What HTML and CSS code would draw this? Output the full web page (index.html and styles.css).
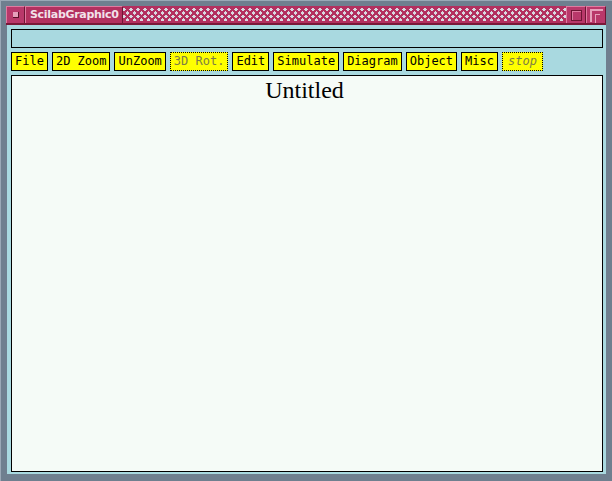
FILE: index.html
```html
<!DOCTYPE html>
<html>
<head>
<meta charset="utf-8">
<link rel="stylesheet" href="styles.css">
</head>
<body>
<div class="window">
  <div class="titlebar">
    <div class="tbtn menu"><span class="sq"></span></div>
    <div class="title">ScilabGraphic0</div>
    <div class="pattern"></div>
    <div class="tbtn iconify"><span class="box"></span></div>
    <div class="tbtn maximize"><span class="max"></span></div>
  </div>
  <div class="client">
    <div class="field"></div>
    <div class="menubar">
      <div class="mbtn">File</div>
      <div class="mbtn">2D Zoom</div>
      <div class="mbtn">UnZoom</div>
      <div class="mbtn off">3D Rot.</div>
      <div class="mbtn">Edit</div>
      <div class="mbtn">Simulate</div>
      <div class="mbtn">Diagram</div>
      <div class="mbtn">Object</div>
      <div class="mbtn">Misc</div>
      <div class="mbtn off stop">stop</div>
    </div>
    <div class="canvas">
      <div class="caption">Untitled</div>
    </div>
  </div>
</div>
</body>
</html>
```
FILE: styles.css
```css
html, body {
  margin: 0;
  padding: 0;
  width: 612px;
  height: 481px;
  overflow: hidden;
  background: #6f7f8f;
}
.window {
  box-sizing: border-box;
  width: 612px;
  height: 481px;
  padding: 6px 6px 7px 6px;
  background: #6f7f8f;
  border-top: 1px solid #9aa8b6;
  border-left: 1px solid #9aa8b6;
  display: flex;
  flex-direction: column;
}
.titlebar {
  height: 17px;
  display: flex;
  background: #b3305f;
  border-bottom: 2px solid #7a1838;
  margin-top: -1px;
  margin-left: -1px;
}
.tbtn {
  width: 16px;
  height: 16px;
  background: #b9386a;
  border-top: 1px solid #e07aa0;
  border-left: 1px solid #e07aa0;
  border-right: 1px solid #6e1534;
  display: flex;
  align-items: center;
  justify-content: center;
}
.menu { width: 17px; }
.sq {
  width: 5px;
  height: 5px;
  background: #e6a0bb;
  border-right: 1px solid #5a1028;
  border-bottom: 1px solid #5a1028;
}
.title {
  width: 92px;
  height: 16px;
  padding-left: 4px;
  background: #b3305f;
  border-top: 1px solid #e07aa0;
  border-left: 1px solid #e07aa0;
  border-right: 1px solid #6e1534;
  color: #f2e2ea;
  font-family: "DejaVu Sans", sans-serif;
  font-weight: bold;
  font-size: 11px;
  line-height: 16px;
  letter-spacing: -0.3px;
  white-space: nowrap;
}
.pattern {
  flex: 1;
  height: 13px;
  margin-top: 2px;
  background-color: #d8d8e0;
  background-image:
    repeating-linear-gradient(45deg, #b3305f 0 2.4px, transparent 2.4px 4.95px),
    repeating-linear-gradient(-45deg, #b3305f 0 2.4px, transparent 2.4px 4.95px);
}
.iconify, .maximize { width: 18px; }
.box {
  width: 9px;
  height: 9px;
  border: 1px solid #6e1534;
  box-shadow: inset 1px 1px 0 #e07aa0;
}
.max {
  width: 11px;
  height: 11px;
  border-top: 2px solid #e6a0bb;
  border-left: 2px solid #e6a0bb;
  position: relative;
}
.max::after {
  content: "";
  position: absolute;
  left: 3px;
  top: 3px;
  width: 4px;
  height: 8px;
  border-top: 1px solid #e6a0bb;
  border-left: 1px solid #e6a0bb;
}
.client {
  flex: 1;
  background: #a9d9e0;
  padding: 4px 3px 2px 4px;
  display: flex;
  flex-direction: column;
  gap: 4px;
}
.field {
  height: 17px;
  border: 1px solid #000;
}
.menubar {
  display: flex;
  gap: 4px;
  height: 19px;
}
.mbtn {
  box-sizing: border-box;
  height: 19px;
  padding: 0 3px;
  background: #ffff00;
  border: 1px solid #000;
  font-family: "DejaVu Sans Mono", monospace;
  font-size: 12px;
  line-height: 17px;
  color: #000;
  white-space: nowrap;
}
.mbtn.off {
  border: 1px dotted #000;
  color: #7d7d45;
}
.stop { font-style: italic; padding: 0 5px; }
.canvas {
  flex: 1;
  background: #f5fbf7;
  border: 1px solid #000;
  display: flex;
  justify-content: center;
}
.caption {
  font-family: "Liberation Serif", serif;
  font-size: 24px;
  line-height: 28px;
  color: #000;
  margin-left: -5px;
}
```
